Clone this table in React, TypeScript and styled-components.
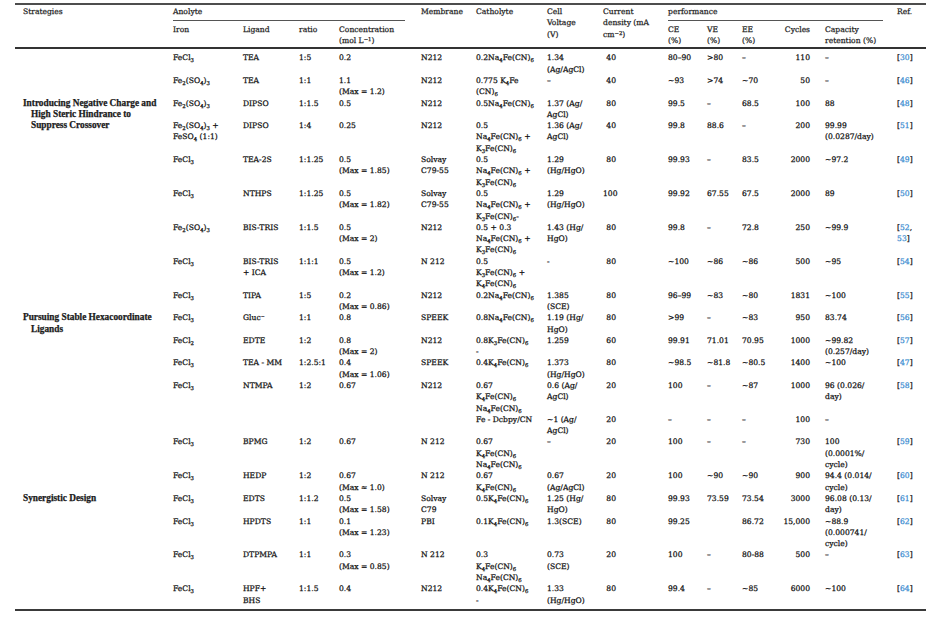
import React from 'react';
import styled, { createGlobalStyle } from 'styled-components';

const GlobalStyle = createGlobalStyle`
  html, body {
    margin: 0;
    background: #ffffff;
  }
  body {
    font-family: "DejaVu Serif", "Liberation Serif", serif;
    color: #141414;
  }
`;

type Row = {
  strategy?: string;
  span?: number;
  covered?: boolean;
  cells: string[];
  refs: number[];
};

// iron, ligand, ratio, concentration, membrane, catholyte, voltage, current, CE, VE, EE, cycles, capacity
const rows: Row[] = [
  { cells: ['FeCl3', 'TEA', '1:5', '0.2', 'N212', '0.2Na4Fe(CN)6', '1.34\n(Ag/AgCl)', '40', '80–90', '>80', '–', '110', '–'], refs: [30] },
  { cells: ['Fe2(SO4)3', 'TEA', '1:1', '1.1\n(Max = 1.2)', 'N212', '0.775 K4Fe\n(CN)6', '–', '40', '∼93', '>74', '∼70', '50', '–'], refs: [46] },
  {
    strategy: 'Introducing Negative Charge and\nHigh Steric Hindrance to\nSuppress Crossover',
    span: 2,
    cells: ['Fe2(SO4)3', 'DIPSO', '1:1.5', '0.5', 'N212', '0.5Na4Fe(CN)6', '1.37 (Ag/\nAgCl)', '80', '99.5', '–', '68.5', '100', '88'],
    refs: [48],
  },
  { covered: true, cells: ['Fe2(SO4)3 +\nFeSO4 (1:1)', 'DIPSO', '1:4', '0.25', 'N212', '0.5\nNa4Fe(CN)6 +\nK3Fe(CN)6', '1.36 (Ag/\nAgCl)', '40', '99.8', '88.6', '–', '200', '99.99\n(0.0287/day)'], refs: [51] },
  { cells: ['FeCl3', 'TEA-2S', '1:1.25', '0.5\n(Max = 1.85)', 'Solvay\nC79-55', '0.5\nNa4Fe(CN)6 +\nK3Fe(CN)6', '1.29\n(Hg/HgO)', '80', '99.93', '–', '83.5', '2000', '∼97.2'], refs: [49] },
  { cells: ['FeCl3', 'NTHPS', '1:1.25', '0.5\n(Max = 1.82)', 'Solvay\nC79-55', '0.5\nNa4Fe(CN)6 +\nK3Fe(CN)6-', '1.29\n(Hg/HgO)', '100', '99.92', '67.55', '67.5', '2000', '89'], refs: [50] },
  { cells: ['Fe2(SO4)3', 'BIS-TRIS', '1:1.5', '0.5\n(Max = 2)', 'N212', '0.5 + 0.3\nNa4Fe(CN)6 +\nK3Fe(CN)6', '1.43 (Hg/\nHgO)', '80', '99.8', '–', '72.8', '250', '∼99.9'], refs: [52, 53] },
  { cells: ['FeCl3', 'BIS-TRIS\n+ ICA', '1:1:1', '0.5\n(Max = 1.2)', 'N 212', '0.5\nK3Fe(CN)6 +\nK4Fe(CN)6', '-', '80', '∼100', '∼86', '∼86', '500', '∼95'], refs: [54] },
  { cells: ['FeCl3', 'TIPA', '1:5', '0.2\n(Max = 0.86)', 'N212', '0.2Na4Fe(CN)6', '1.385\n(SCE)', '80', '96–99', '∼83', '∼80', '1831', '∼100'], refs: [55] },
  {
    strategy: 'Pursuing Stable Hexacoordinate\nLigands',
    cells: ['FeCl3', 'Gluc⁻', '1:1', '0.8', 'SPEEK', '0.8Na4Fe(CN)6', '1.19 (Hg/\nHgO)', '80', '>99', '–', '∼83', '950', '83.74'],
    refs: [56],
  },
  { cells: ['FeCl2', 'EDTE', '1:2', '0.8\n(Max = 2)', 'N212', '0.8K3Fe(CN)6\n-', '1.259', '60', '99.91', '71.01', '70.95', '1000', '∼99.82\n(0.257/day)'], refs: [57] },
  { cells: ['FeCl3', 'TEA - MM', '1:2.5:1', '0.4\n(Max = 1.06)', 'SPEEK', '0.4K4Fe(CN)6', '1.373\n(Hg/HgO)', '80', '∼98.5', '∼81.8', '∼80.5', '1400', '∼100'], refs: [47] },
  { cells: ['FeCl3', 'NTMPA', '1:2', '0.67', 'N212', '0.67\nK4Fe(CN)6\nNa4Fe(CN)6', '0.6 (Ag/\nAgCl)', '20', '100', '–', '∼87', '1000', '96 (0.026/\nday)'], refs: [58] },
  { cells: ['', '', '', '', '', 'Fe - Dcbpy/CN', '∼1 (Ag/\nAgCl)', '20', '–', '–', '–', '100', '–'], refs: [] },
  { cells: ['FeCl3', 'BPMG', '1:2', '0.67', 'N 212', '0.67\nK4Fe(CN)6\nNa4Fe(CN)6', '–', '20', '100', '–', '–', '730', '100\n(0.0001%/\ncycle)'], refs: [59] },
  { cells: ['FeCl3', 'HEDP', '1:2', '0.67\n(Max ≈ 1.0)', 'N 212', '0.67\nK4Fe(CN)6', '0.67\n(Ag/AgCl)', '20', '100', '∼90', '∼90', '900', '94.4 (0.014/\ncycle)'], refs: [60] },
  {
    strategy: 'Synergistic Design',
    cells: ['FeCl3', 'EDTS', '1:1.2', '0.5\n(Max = 1.58)', 'Solvay\nC79', '0.5K4Fe(CN)6', '1.25 (Hg/\nHgO)', '80', '99.93', '73.59', '73.54', '3000', '96.08 (0.13/\nday)'],
    refs: [61],
  },
  { cells: ['FeCl3', 'HPDTS', '1:1', '0.1\n(Max = 1.23)', 'PBI', '0.1K4Fe(CN)6', '1.3(SCE)', '80', '99.25', '', '86.72', '15,000', '∼88.9\n(0.000741/\ncycle)'], refs: [62] },
  { cells: ['FeCl3', 'DTPMPA', '1:1', '0.3\n(Max = 0.85)', 'N 212', '0.3\nK4Fe(CN)6\nNa4Fe(CN)6', '0.73\n(SCE)', '20', '100', '–', '80-88', '500', '–'], refs: [63] },
  { cells: ['FeCl3', 'HPF+\nBHS', '1:1.5', '0.4', 'N212', '0.4K4Fe(CN)6\n-', '1.33\n(Hg/HgO)', '80', '99.4', '–', '∼85', '6000', '∼100'], refs: [64] },
];

// columns after the strategy one; chem columns get subscripts
const columns = [
  { width: 70, chem: true },
  { width: 56 },
  { width: 40 },
  { width: 82 },
  { width: 55 },
  { width: 71, chem: true },
  { width: 56 },
  { width: 65, align: 'right', pr: 52 },
  { width: 39 },
  { width: 35 },
  { width: 41 },
  { width: 42, align: 'right', pr: 15 },
  { width: 72 },
];

const Page = styled.div`
  padding: 3px 8px 0 15px;
`;

const Table = styled.table`
  width: 911px;
  table-layout: fixed;
  border-collapse: collapse;
  font-size: 7.6px;
  line-height: 11.3px;
  -webkit-text-stroke: 0.25px currentColor;
  border-top: 2px solid #4d4d4d;
  border-bottom: 2px solid #3a3a3a;
`;

const Col = styled.col<{ $w: number }>`
  width: ${(p) => p.$w}px;
`;

const Head = styled.thead`
  border-bottom: 2px solid #333333;
`;

const Th = styled.th<{ $align?: string; $pl?: number }>`
  text-align: ${(p) => p.$align || 'left'};
  font-weight: normal;
  vertical-align: top;
  white-space: nowrap;
  padding: 1px ${(p) => (p.$align === 'right' ? 15 : 0)}px 0 ${(p) => p.$pl || 0}px;
  color: #262626;
`;

const SubTh = styled(Th)`
  padding-top: 2.5px;
  padding-bottom: 1px;
`;

const GroupTh = styled(Th)<{ $inset: number }>`
  padding-right: ${(p) => p.$inset}px;
`;

const GroupLabel = styled.div`
  padding-bottom: 3px;
  border-bottom: 1.5px solid #555555;
`;

const Body = styled.tbody`
  tr:first-child td {
    padding-top: 3px;
  }
  tr:last-child td {
    padding-bottom: 3px;
  }
`;

const Td = styled.td<{ $align?: string; $pr?: number }>`
  text-align: ${(p) => p.$align || 'left'};
  padding: 0 ${(p) => p.$pr || 0}px 0 0;
  vertical-align: top;
  white-space: nowrap;
`;

const StrategyTd = styled.td`
  vertical-align: top;
  padding: 0 0 0 16px;
  text-indent: -8px;
  font-family: "Liberation Serif", serif;
  font-size: 9.3px;
  font-weight: bold;
  white-space: nowrap;
  color: #1a1a1a;
`;

const Sub = styled.sub`
  font-size: 0.7em;
  line-height: 0;
  vertical-align: -0.3em;
`;

const Sup = styled.sup`
  font-size: 0.7em;
  line-height: 0;
  vertical-align: 0.45em;
`;

const RefNum = styled.span`
  color: #3f8fd2;
`;

const formula = (s: string) => {
  const parts: React.ReactNode[] = [];
  const re = /([A-Za-z)])(\d+)/g;
  let last = 0;
  let m: RegExpExecArray | null;
  while ((m = re.exec(s))) {
    const at = m.index + 1;
    parts.push(s.slice(last, at));
    parts.push(<Sub key={at}>{m[2]}</Sub>);
    last = at + m[2].length;
  }
  parts.push(s.slice(last));
  return parts;
};

const lines = (text: string, chem?: boolean) =>
  text.split('\n').map((line, i) => (
    <React.Fragment key={i}>
      {i > 0 && <br />}
      {chem ? formula(line) : line}
    </React.Fragment>
  ));

const Refs = ({ refs }: { refs: number[] }) => {
  if (!refs.length) return null;
  return (
    <>
      [
      {refs.map((r, i) => (
        <React.Fragment key={r}>
          {i > 0 && (
            <>
              ,<br />
            </>
          )}
          <RefNum>{r}</RefNum>
        </React.Fragment>
      ))}
      ]
    </>
  );
};

export default function App() {
  return (
    <Page>
      <GlobalStyle />
      <Table>
        <colgroup>
          <Col $w={158} />
          {columns.map((c, i) => (
            <Col key={i} $w={c.width} />
          ))}
          <Col $w={29} />
        </colgroup>
        <Head>
          <tr>
            <Th rowSpan={2} $pl={8}>Strategies</Th>
            <GroupTh colSpan={4} $inset={16}>
              <GroupLabel>Anolyte</GroupLabel>
            </GroupTh>
            <Th rowSpan={2}>Membrane</Th>
            <Th rowSpan={2}>Catholyte</Th>
            <Th rowSpan={2}>
              Cell
              <br />
              Voltage
              <br />
              (V)
            </Th>
            <Th rowSpan={2}>
              Current
              <br />
              density (mA
              <br />
              cm<Sup>−2</Sup>)
            </Th>
            <GroupTh colSpan={5} $inset={14}>
              <GroupLabel>performance</GroupLabel>
            </GroupTh>
            <Th rowSpan={2}>Ref.</Th>
          </tr>
          <tr>
            <SubTh>Iron</SubTh>
            <SubTh>Ligand</SubTh>
            <SubTh>ratio</SubTh>
            <SubTh>
              Concentration
              <br />
              (mol L<Sup>−1</Sup>)
            </SubTh>
            <SubTh>
              CE
              <br />
              (%)
            </SubTh>
            <SubTh>
              VE
              <br />
              (%)
            </SubTh>
            <SubTh>
              EE
              <br />
              (%)
            </SubTh>
            <SubTh $align="right">Cycles</SubTh>
            <SubTh>
              Capacity
              <br />
              retention (%)
            </SubTh>
          </tr>
        </Head>
        <Body>
          {rows.map((row, ri) => (
            <tr key={ri}>
              {!row.covered && (
                <StrategyTd rowSpan={row.span || 1}>{row.strategy ? lines(row.strategy) : null}</StrategyTd>
              )}
              {row.cells.map((cell, ci) => (
                <Td key={ci} $align={columns[ci].align} $pr={columns[ci].pr}>
                  {lines(cell, columns[ci].chem)}
                </Td>
              ))}
              <Td>
                <Refs refs={row.refs} />
              </Td>
            </tr>
          ))}
        </Body>
      </Table>
    </Page>
  );
}
